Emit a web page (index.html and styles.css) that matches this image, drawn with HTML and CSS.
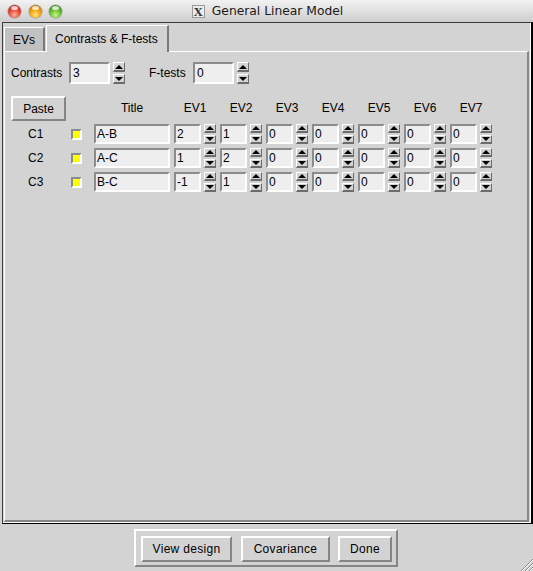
FILE: index.html
```html
<!DOCTYPE html>
<html>
<head>
<meta charset="utf-8">
<title>General Linear Model</title>
<link rel="stylesheet" href="styles.css">
</head>
<body>
<div class="window">
  <header class="titlebar">
    <div class="lights"><span class="light red"></span><span class="light yellow"></span><span class="light green"></span></div>
    <div class="title"><span class="xlogo">X</span>General Linear Model</div>
  </header>
  <div class="frame">
    <div class="tabs">
      <div class="tab">EVs</div>
      <div class="tab active">Contrasts &amp; F-tests</div>
    </div>
    <div class="panel">
      <div class="counts">
        <span class="lbl lbl-contrasts">Contrasts</span>
        <span class="entry entry-count">3</span>
        <span class="spin"><span class="arrow up"></span><span class="arrow down"></span></span>
        <span class="lbl lbl-ftests">F-tests</span>
        <span class="entry entry-count">0</span>
        <span class="spin"><span class="arrow up"></span><span class="arrow down"></span></span>
      </div>
      <div class="grid">
        <button class="btn paste">Paste</button>
        <span></span>
        <span class="head">Title</span>
        <span class="head ev">EV1</span>
        <span class="head ev">EV2</span>
        <span class="head ev">EV3</span>
        <span class="head ev">EV4</span>
        <span class="head ev">EV5</span>
        <span class="head ev">EV6</span>
        <span class="head ev">EV7</span>

        <span class="rowlbl">C1</span>
        <span class="checkcell"><span class="check"></span></span>
        <span class="entry entry-title">A-B</span>
        <span class="evcell"><span class="entry entry-ev">2</span><span class="spin sm"><span class="arrow up"></span><span class="arrow down"></span></span></span>
        <span class="evcell"><span class="entry entry-ev">1</span><span class="spin sm"><span class="arrow up"></span><span class="arrow down"></span></span></span>
        <span class="evcell"><span class="entry entry-ev">0</span><span class="spin sm"><span class="arrow up"></span><span class="arrow down"></span></span></span>
        <span class="evcell"><span class="entry entry-ev">0</span><span class="spin sm"><span class="arrow up"></span><span class="arrow down"></span></span></span>
        <span class="evcell"><span class="entry entry-ev">0</span><span class="spin sm"><span class="arrow up"></span><span class="arrow down"></span></span></span>
        <span class="evcell"><span class="entry entry-ev">0</span><span class="spin sm"><span class="arrow up"></span><span class="arrow down"></span></span></span>
        <span class="evcell"><span class="entry entry-ev">0</span><span class="spin sm"><span class="arrow up"></span><span class="arrow down"></span></span></span>

        <span class="rowlbl">C2</span>
        <span class="checkcell"><span class="check"></span></span>
        <span class="entry entry-title">A-C</span>
        <span class="evcell"><span class="entry entry-ev">1</span><span class="spin sm"><span class="arrow up"></span><span class="arrow down"></span></span></span>
        <span class="evcell"><span class="entry entry-ev">2</span><span class="spin sm"><span class="arrow up"></span><span class="arrow down"></span></span></span>
        <span class="evcell"><span class="entry entry-ev">0</span><span class="spin sm"><span class="arrow up"></span><span class="arrow down"></span></span></span>
        <span class="evcell"><span class="entry entry-ev">0</span><span class="spin sm"><span class="arrow up"></span><span class="arrow down"></span></span></span>
        <span class="evcell"><span class="entry entry-ev">0</span><span class="spin sm"><span class="arrow up"></span><span class="arrow down"></span></span></span>
        <span class="evcell"><span class="entry entry-ev">0</span><span class="spin sm"><span class="arrow up"></span><span class="arrow down"></span></span></span>
        <span class="evcell"><span class="entry entry-ev">0</span><span class="spin sm"><span class="arrow up"></span><span class="arrow down"></span></span></span>

        <span class="rowlbl">C3</span>
        <span class="checkcell"><span class="check"></span></span>
        <span class="entry entry-title">B-C</span>
        <span class="evcell"><span class="entry entry-ev">-1</span><span class="spin sm"><span class="arrow up"></span><span class="arrow down"></span></span></span>
        <span class="evcell"><span class="entry entry-ev">1</span><span class="spin sm"><span class="arrow up"></span><span class="arrow down"></span></span></span>
        <span class="evcell"><span class="entry entry-ev">0</span><span class="spin sm"><span class="arrow up"></span><span class="arrow down"></span></span></span>
        <span class="evcell"><span class="entry entry-ev">0</span><span class="spin sm"><span class="arrow up"></span><span class="arrow down"></span></span></span>
        <span class="evcell"><span class="entry entry-ev">0</span><span class="spin sm"><span class="arrow up"></span><span class="arrow down"></span></span></span>
        <span class="evcell"><span class="entry entry-ev">0</span><span class="spin sm"><span class="arrow up"></span><span class="arrow down"></span></span></span>
        <span class="evcell"><span class="entry entry-ev">0</span><span class="spin sm"><span class="arrow up"></span><span class="arrow down"></span></span></span>
      </div>
    </div>
  </div>
  <footer class="bottom">
    <div class="btnbox">
      <button class="btn btn-view">View design</button>
      <button class="btn btn-cov">Covariance</button>
      <button class="btn btn-done">Done</button>
    </div>
    <svg class="grip" width="13" height="13" viewBox="0 0 13 13">
      <line x1="1" y1="13" x2="13" y2="1" stroke="#8c8c8c" stroke-width="1"/>
      <line x1="2" y1="13" x2="13" y2="2" stroke="#ffffff" stroke-width="1"/>
      <line x1="5" y1="13" x2="13" y2="5" stroke="#8c8c8c" stroke-width="1"/>
      <line x1="6" y1="13" x2="13" y2="6" stroke="#ffffff" stroke-width="1"/>
      <line x1="9" y1="13" x2="13" y2="9" stroke="#8c8c8c" stroke-width="1"/>
      <line x1="10" y1="13" x2="13" y2="10" stroke="#ffffff" stroke-width="1"/>
    </svg>
  </footer>
</div>
</body>
</html>
```

FILE: styles.css
```css
* { box-sizing: border-box; }
html, body { margin: 0; padding: 0; }
body {
  width: 533px;
  height: 571px;
  overflow: hidden;
  background: #d3d3d3;
  font-family: "Liberation Sans", Arial, sans-serif;
  font-size: 12px;
  color: #000;
}
.window {
  width: 533px;
  height: 571px;
  display: flex;
  flex-direction: column;
}

/* title bar */
.titlebar {
  height: 22px;
  flex: none;
  display: grid;
  background: linear-gradient(#f2f2f2, #e2e2e2 45%, #cdcdcd);
}
.titlebar > * { grid-area: 1 / 1; }
.lights {
  display: flex;
  align-items: center;
  gap: 7.7px;
  padding-left: 8px;
}
.light {
  width: 13px;
  height: 13px;
  border-radius: 50%;
  position: relative;
  box-shadow: 0 0 0 0.5px rgba(0,0,0,0.35);
}
.light::after {
  content: "";
  position: absolute;
  left: 3px;
  top: 1px;
  width: 7px;
  height: 4px;
  border-radius: 50%;
  background: rgba(255,255,255,0.75);
}
.red { background: radial-gradient(circle at 50% 75%, #ffb09c 0%, #e4402f 50%, #9a150c 100%); }
.yellow { background: radial-gradient(circle at 50% 75%, #ffe47a 0%, #f09c06 50%, #a55a00 100%); }
.green { background: radial-gradient(circle at 50% 75%, #c8f58a 0%, #5fb82a 50%, #2a6c0c 100%); }
.title {
  justify-self: center;
  align-self: center;
  display: flex;
  align-items: center;
  font-family: "DejaVu Sans", sans-serif;
  font-size: 12.3px;
  color: #1a1a1a;
  padding-left: 2px;
}
.xlogo {
  width: 13px;
  height: 13px;
  margin-right: 7px;
  border: 1px solid #9a9a9a;
  background: #ececec;
  font-family: "Liberation Serif", serif;
  font-weight: bold;
  font-size: 13px;
  line-height: 12px;
  text-align: center;
  color: #333;
}

/* outer frame */
.frame {
  flex: none;
  height: 502px;
  margin-left: 2px;
  border-left: 1px solid #3c3c3c;
  border-top: 1px solid #3c3c3c;
  border-right: 2px solid #000;
  border-bottom: 1px solid #000;
  padding: 2px 2px 1px 1px;
  box-shadow: inset -1px -1px 0 #fff;
  display: flex;
  flex-direction: column;
}

/* tabs */
.tabs {
  height: 26px;
  flex: none;
  display: flex;
  align-items: flex-end;
  position: relative;
  z-index: 1;
}
.tab {
  height: 24px;
  padding: 0 8px;
  display: flex;
  align-items: center;
  background: #c1c1c1;
  border-top: 1px solid #fff;
  border-left: 1px solid #fff;
  border-right: 2px solid #7a7a7a;
}
.tab.active {
  height: 27px;
  margin-bottom: -1px;
  margin-left: 1px;
  padding: 0 9px 1px 8px;
  background: #d3d3d3;
}

/* panel */
.panel {
  flex: 1;
  border-top: 1px solid #fff;
  border-left: 1px solid #fff;
  border-right: 2px solid #878787;
  border-bottom: 2px solid #878787;
  padding: 10px 0 0 6px;
}
.counts {
  display: flex;
  align-items: center;
  height: 22px;
}
.lbl-contrasts { width: 58px; }
.lbl-ftests { width: 44px; margin-left: 24px; }

.entry {
  display: flex;
  align-items: center;
  background: #eeeeee;
  border-top: 2px solid #8c8c8c;
  border-left: 2px solid #8c8c8c;
  border-bottom: 2px solid #fff;
  border-right: 2px solid #fff;
  padding-left: 1px;
  white-space: nowrap;
  overflow: hidden;
}
.entry-count { width: 41px; height: 22px; padding-left: 2px; }
.entry-title { width: 76px; height: 20px; }
.entry-ev { width: 27px; height: 20px; }

.spin {
  display: flex;
  flex-direction: column;
  justify-content: space-between;
  width: 12px;
  height: 22px;
  margin-left: 3px;
  flex: none;
}
.spin.sm { height: 20px; }
.arrow {
  height: 10px;
  background: #d3d3d3;
  border-top: 1px solid #fff;
  border-left: 1px solid #fff;
  border-bottom: 2px solid #6c6c6c;
  border-right: 1px solid #6c6c6c;
  display: flex;
  align-items: center;
  justify-content: center;
}
.spin.sm .arrow { height: 9px; }
.arrow::before {
  content: "";
  width: 0;
  height: 0;
  border-left: 4px solid transparent;
  border-right: 4px solid transparent;
}
.arrow.up::before { border-bottom: 4px solid #000; }
.arrow.down::before { border-top: 4px solid #000; }

/* contrasts grid */
.grid {
  display: grid;
  grid-template-columns: 55px 28px 76px repeat(7, 46px);
  grid-template-rows: 24px 20px 20px 20px;
  row-gap: 4px;
  margin-top: 12px;
  align-items: center;
}
.head { text-align: center; }
.head.ev { padding-left: 4px; }
.rowlbl { padding-left: 17px; }
.checkcell { display: flex; align-items: center; padding-left: 5px; }
.check {
  width: 11px;
  height: 11px;
  background: #ffff00;
  border-top: 2px solid #8c8c8c;
  border-left: 2px solid #8c8c8c;
  border-bottom: 2px solid #fff;
  border-right: 2px solid #fff;
}
.evcell { display: flex; padding-left: 4px; }

.btn {
  font-family: inherit;
  font-size: 12px;
  color: #000;
  background: #d3d3d3;
  border-style: solid;
  border-width: 2px;
  border-color: #fff #858585 #858585 #fff;
  padding: 0;
  margin: 0;
}
.paste {
  width: 55px;
  height: 25px;
  align-self: start;
}

/* bottom area */
.bottom {
  flex: 1;
  position: relative;
  padding: 5px 0 0 134px;
}
.btnbox {
  display: flex;
  width: 264px;
  height: 38px;
  border-style: solid;
  border-width: 2px;
  border-color: #fff #858585 #858585 #fff;
  padding: 5px 4px 3px 5px;
}
.btnbox .btn { height: 26px; letter-spacing: 0.3px; }
.btn-view { width: 91px; }
.btn-cov { width: 89px; margin-left: 9px; }
.btn-done { width: 54px; margin-left: 8px; }
.grip {
  position: absolute;
  right: 0;
  bottom: 0;
}
```
